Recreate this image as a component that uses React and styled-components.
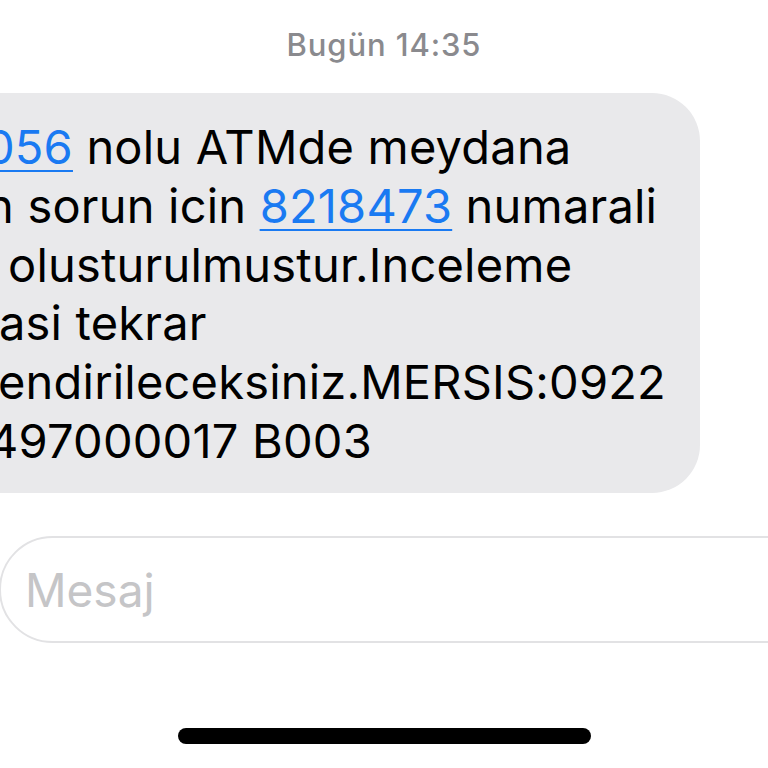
import React from "react";
import styled, { createGlobalStyle } from "styled-components";

const Global = createGlobalStyle`
  html, body {
    margin: 0;
    padding: 0;
    background: #ffffff;
    overflow: hidden;
    width: 768px;
    height: 768px;
  }
  body {
    font-family: Inter, "Noto Sans", "Liberation Sans", sans-serif;
    -webkit-font-smoothing: antialiased;
  }
`;

const Screen = styled.div`
  width: 768px;
  height: 768px;
  display: flex;
  flex-direction: column;
  overflow: hidden;
  position: relative;
`;

const Timestamp = styled.div`
  margin-top: 22px;
  height: 46px;
  line-height: 46px;
  text-align: center;
  font-size: 31px;
  font-weight: 500;
  color: #8a8a8e;
  letter-spacing: 0.9px;
`;

const Thread = styled.div`
  display: flex;
  flex-direction: column;
  padding-top: 25px;
`;

const Bubble = styled.div`
  align-self: flex-start;
  margin-left: -80px;
  width: 780px;
  box-sizing: border-box;
  padding: 25px 0 22px 80px;
  background: #e9e9eb;
  border-radius: 48px;
  display: flex;
  flex-direction: column;
`;

const Line = styled.div`
  margin-left: ${(p) => p.$indent}px;
  white-space: nowrap;
  font-size: 47px;
  line-height: 58.8px;
  color: #000000;
  letter-spacing: 0.2px;
`;

const Link = styled.span`
  color: #1a7af2;
  text-decoration: underline;
  text-decoration-thickness: 2px;
  text-underline-offset: 6px;
`;

const Composer = styled.div`
  margin-top: 43px;
  width: 820px;
  height: 107px;
  box-sizing: border-box;
  border: 2px solid #e2e2e4;
  border-radius: 54px;
  display: flex;
  align-items: center;
  padding-left: 24px;
  margin-left: -1px;
`;

const Placeholder = styled.span`
  font-size: 46px;
  color: #c5c5c7;
  font-weight: 400;
  padding-top: 2px;
`;

const HomeBar = styled.div`
  margin: auto auto 24px;
  width: 413px;
  height: 16px;
  border-radius: 8px;
  background: #000;
`;

export default function App() {
  return (
    <>
      <Global />
      <Screen>
        <Timestamp>Bugün 14:35</Timestamp>
        <Thread>
          <Bubble>
            <Line $indent={-15}>
              <Link>056</Link> nolu ATMde meydana
            </Line>
            <Line $indent={-14}>
              n sorun icin <Link>8218473</Link> numarali
            </Line>
            <Line $indent={8}>olusturulmustur.Inceleme</Line>
            <Line $indent={-1}>asi tekrar</Line>
            <Line $indent={-2}>endirileceksiniz.MERSIS:0922</Line>
            <Line $indent={-12}>497000017 B003</Line>
          </Bubble>
        </Thread>
        <Composer>
          <Placeholder>Mesaj</Placeholder>
        </Composer>
        <HomeBar />
      </Screen>
    </>
  );
}
